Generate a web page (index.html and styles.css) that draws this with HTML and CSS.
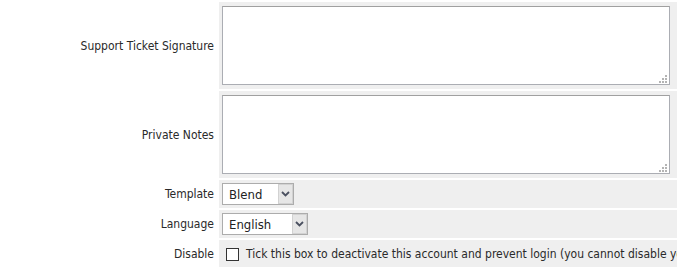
FILE: index.html
```html
<!DOCTYPE html>
<html lang="en">
<head>
  <meta charset="UTF-8" />
  <title>Edit Admin</title>
  <link rel="stylesheet" href="styles.css">
</head>
<body>
  <table class="form">
    <tr>
      <td class="fieldlabel">Support Ticket Signature</td>
      <td class="fieldarea tall">
        <span class="area-wrap">
          <textarea name="signature"></textarea>
          <span class="grip"></span>
        </span>
      </td>
    </tr>
    <tr>
      <td class="fieldlabel">Private Notes</td>
      <td class="fieldarea tall">
        <span class="area-wrap">
          <textarea name="notes"></textarea>
          <span class="grip"></span>
        </span>
      </td>
    </tr>
    <tr>
      <td class="fieldlabel">Template</td>
      <td class="fieldarea">
        <span class="select-wrap template">
          <select name="template">
            <option>Blend</option>
            <option>V4</option>
          </select>
          <span class="select-btn">
            <svg width="9" height="6" viewBox="0 0 9 6"><path d="M1 1 L4.5 4.5 L8 1" fill="none" stroke="#4a5060" stroke-width="1.8"/></svg>
          </span>
        </span>
      </td>
    </tr>
    <tr>
      <td class="fieldlabel">Language</td>
      <td class="fieldarea">
        <span class="select-wrap language">
          <select name="language">
            <option>English</option>
          </select>
          <span class="select-btn">
            <svg width="9" height="6" viewBox="0 0 9 6"><path d="M1 1 L4.5 4.5 L8 1" fill="none" stroke="#4a5060" stroke-width="1.8"/></svg>
          </span>
        </span>
      </td>
    </tr>
    <tr>
      <td class="fieldlabel">Disable</td>
      <td class="fieldarea">
        <label class="check">
          <input type="checkbox" name="disabled" />
          Tick this box to deactivate this account and prevent login (you cannot disable your own account)
        </label>
      </td>
    </tr>
  </table>
</body>
</html>
```

FILE: styles.css
```css
html, body {
  margin: 0;
  padding: 0;
  background: #fff;
  overflow: hidden;
}

body {
  font-family: 'DejaVu Sans Condensed', Tahoma, sans-serif;
  font-size: 12px;
  color: #2a2a2a;
}

.form {
  border-collapse: separate;
  border-spacing: 2px;
  table-layout: fixed;
  width: 920px;
}

.fieldlabel {
  width: 212px;
  padding: 0 3px 0 0;
  text-align: right;
  vertical-align: middle;
  white-space: nowrap;
}

.fieldarea {
  background: #efefef;
  padding: 3px;
  white-space: nowrap;
  overflow: hidden;
}

.fieldarea.tall {
  padding: 4px 3px;
}

.area-wrap {
  position: relative;
  display: inline-block;
  vertical-align: top;
}

textarea {
  display: block;
  box-sizing: border-box;
  width: 448px;
  height: 79px;
  margin: 0;
  border: 1px solid #abadb3;
  border-top-color: #a0a0a0;
  background: #fff;
  resize: none;
  font-family: inherit;
  font-size: 12px;
}

/* dotted resize grip, like the old IE one */
.grip {
  position: absolute;
  right: 3px;
  bottom: 2px;
  width: 2px;
  height: 2px;
  background: #b4b4b4;
  box-shadow: -3px 0 #b4b4b4, -6px 0 #b4b4b4,
              0 -3px #b4b4b4, -3px -3px #b4b4b4,
              0 -6px #b4b4b4;
}

.select-wrap {
  position: relative;
  display: inline-block;
  vertical-align: middle;
}

.select-wrap select {
  -webkit-appearance: none;
  appearance: none;
  box-sizing: border-box;
  height: 22px;
  margin: 0;
  padding: 0 18px 0 6px;
  border: 1px solid #acacac;
  border-radius: 0;
  background: #fff;
  font-family: inherit;
  font-size: 13px;
  color: #222;
  display: block;
}

.select-wrap.template select {
  width: 72px;
}

.select-wrap.language select {
  width: 86px;
}

.select-btn {
  position: absolute;
  top: 1px;
  right: 1px;
  bottom: 1px;
  width: 15px;
  box-sizing: border-box;
  background: #e6e6e6;
  border: 1px solid #d2d2d2;
  display: flex;
  align-items: center;
  justify-content: center;
  pointer-events: none;
}

.check {
  display: flex;
  align-items: center;
  gap: 7px;
  height: 22px;
  padding-left: 4px;
  font-size: 12px;
  color: #2a2a2a;
}

.check input {
  -webkit-appearance: none;
  appearance: none;
  width: 13px;
  height: 13px;
  margin: 0;
  border: 1px solid #333;
  background: #fff;
}
```
